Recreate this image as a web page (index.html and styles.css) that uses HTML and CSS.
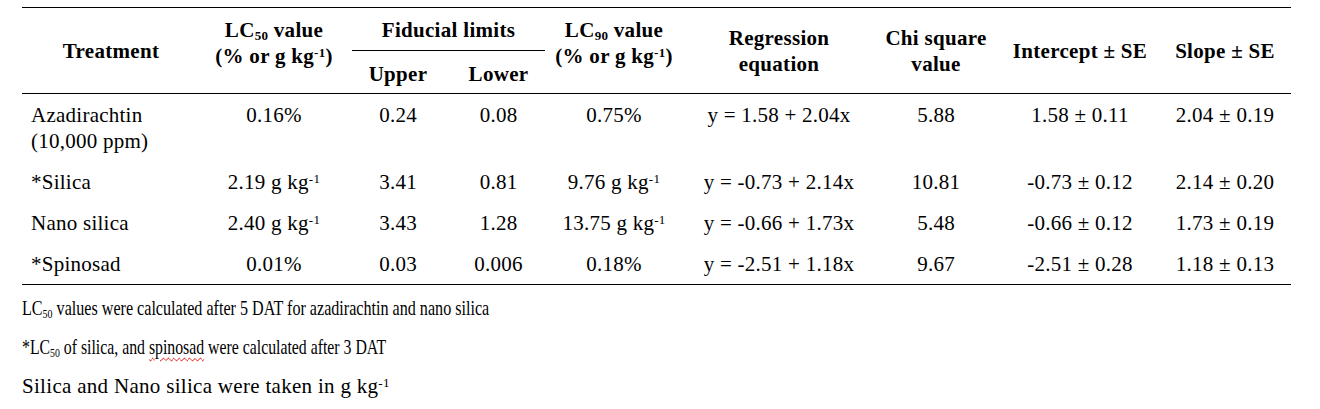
FILE: index.html
```html
<!DOCTYPE html>
<html lang="en">
<head>
<meta charset="utf-8">
<title>LC50 table</title>
<link rel="stylesheet" href="styles.css">
</head>
<body>
<div class="page">
  <table class="data">
    <colgroup>
      <col class="c1"><col class="c2"><col class="c3"><col class="c4"><col class="c5"><col class="c6"><col class="c7"><col class="c8"><col class="c9">
    </colgroup>
    <thead>
      <tr>
        <th rowspan="2" class="mid">Treatment</th>
        <th rowspan="2" class="top">LC<sub>50</sub> value<br>(% or g kg<sup>-1</sup>)</th>
        <th colspan="2" class="fid"><div class="fid-rule">Fiducial limits</div></th>
        <th rowspan="2" class="top">LC<sub>90</sub> value<br>(% or g kg<sup>-1</sup>)</th>
        <th rowspan="2" class="mid">Regression<br>equation</th>
        <th rowspan="2" class="mid">Chi square<br>value</th>
        <th rowspan="2" class="mid">Intercept ± SE</th>
        <th rowspan="2" class="mid last">Slope ± SE</th>
      </tr>
      <tr>
        <th class="sub">Upper</th>
        <th class="sub">Lower</th>
      </tr>
    </thead>
    <tbody>
      <tr>
        <td class="name">Azadirachtin<br>(10,000 ppm)</td>
        <td>0.16%</td>
        <td>0.24</td>
        <td>0.08</td>
        <td>0.75%</td>
        <td>y = 1.58 + 2.04x</td>
        <td>5.88</td>
        <td>1.58 ± 0.11</td>
        <td class="last">2.04 ± 0.19</td>
      </tr>
      <tr>
        <td class="name">*Silica</td>
        <td>2.19 g kg<sup>-1</sup></td>
        <td>3.41</td>
        <td>0.81</td>
        <td>9.76 g kg<sup>-1</sup></td>
        <td>y = -0.73 + 2.14x</td>
        <td>10.81</td>
        <td>-0.73 ± 0.12</td>
        <td class="last">2.14 ± 0.20</td>
      </tr>
      <tr>
        <td class="name">Nano silica</td>
        <td>2.40 g kg<sup>-1</sup></td>
        <td>3.43</td>
        <td>1.28</td>
        <td>13.75 g kg<sup>-1</sup></td>
        <td>y = -0.66 + 1.73x</td>
        <td>5.48</td>
        <td>-0.66 ± 0.12</td>
        <td class="last">1.73 ± 0.19</td>
      </tr>
      <tr>
        <td class="name">*Spinosad</td>
        <td>0.01%</td>
        <td>0.03</td>
        <td>0.006</td>
        <td>0.18%</td>
        <td>y = -2.51 + 1.18x</td>
        <td>9.67</td>
        <td>-2.51 ± 0.28</td>
        <td class="last">1.18 ± 0.13</td>
      </tr>
    </tbody>
  </table>
  <div class="notes">
    <p class="narrow n1">LC<sub>50</sub> values were calculated after 5 DAT for azadirachtin and nano silica</p>
    <p class="narrow n2">*LC<sub>50</sub> of silica, and <span class="spell">spinosad</span> were calculated after 3 DAT</p>
    <p class="wide">Silica and Nano silica were taken in g kg<sup>-1</sup></p>
  </div>
</div>
</body>
</html>
```
FILE: styles.css
```css
html, body {
  margin: 0;
  padding: 0;
  background: #fff;
}
body {
  font-family: "Liberation Serif", "Times New Roman", serif;
  font-size: 20px;
  color: #000;
}
.page {
  padding: 7px 0 0 22px;
}
.data {
  border-collapse: collapse;
  table-layout: fixed;
  width: 1269px;
  border-top: 1px solid #000;
  border-bottom: 1px solid #000;
}
.c1 { width: 178px; }
.c2 { width: 148px; }
.c3 { width: 100px; }
.c4 { width: 101px; }
.c5 { width: 130px; }
.c6 { width: 200px; }
.c7 { width: 114px; }
.c8 { width: 174px; }
.c9 { width: 124px; }

.data th, .data td {
  padding: 0 4px;
  text-align: center;
  line-height: 26px;
  white-space: nowrap;
  font-size: 21px;
  letter-spacing: 0.25px;
}
.data th {
  font-weight: bold;
  letter-spacing: 0.3px;
}
.data thead {
  border-bottom: 1px solid #000;
}
.data th.mid { vertical-align: middle; }
.data th.top { vertical-align: top; padding-top: 9px; }
.data th.fid {
  padding: 9px 4px 0;
  vertical-align: top;
}
.fid-rule {
  border-bottom: 1px solid #000;
  padding-bottom: 7px;
}
.data th.sub {
  padding-top: 10px;
  padding-bottom: 6px;
}
.data th.last, .data td.last {
  padding-left: 0;
  padding-right: 8px;
}
.data td {
  vertical-align: top;
  padding-top: 8px;
  padding-bottom: 7px;
}
.data td.name {
  text-align: left;
  padding-left: 9px;
}
sub, sup {
  font-size: 0.62em;
  line-height: 0;
  position: relative;
  vertical-align: baseline;
}
sub { bottom: -0.25em; }
sup { top: -0.45em; }

.notes {
  padding-top: 4px;
}
.notes p {
  margin: 0;
  line-height: 39px;
  white-space: nowrap;
}
.notes p.narrow {
  font-size: 21px;
  transform-origin: 0 50%;
}
.notes p.n1 { transform: scaleX(0.767); }
.notes p.n2 { transform: scaleX(0.752); }
.notes p.wide {
  font-size: 21px;
  letter-spacing: 0.3px;
}
.spell {
  text-decoration: underline wavy #e00000;
  text-decoration-thickness: 1px;
  text-underline-offset: 3px;
}
```
